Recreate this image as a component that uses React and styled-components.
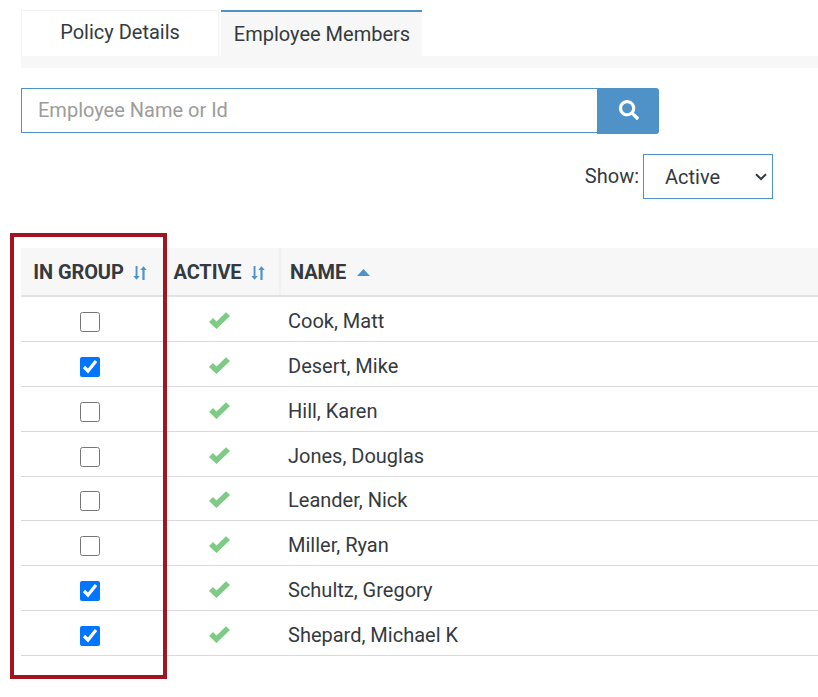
import React from "react";
import styled, { createGlobalStyle } from "styled-components";
import { FaSearch } from "react-icons/fa";

const GlobalStyle = createGlobalStyle`
  html, body {
    margin: 0;
    background: #fff;
    overflow: hidden;
  }
  body {
    font-family: Roboto, "Liberation Sans", sans-serif;
    color: #343a40;
  }
`;

const Page = styled.div`
  position: relative;
  width: 818px;
  height: 697px;
  padding: 10px 0 0 21px;
  box-sizing: border-box;
`;

const TabBar = styled.div`
  display: flex;
  gap: 2px;
  height: 46px;
`;

const Tab = styled.div`
  box-sizing: border-box;
  width: ${(p) => p.$width}px;
  display: flex;
  justify-content: center;
  align-items: center;
  font-size: 20px;
  border: ${(p) => (p.$active ? "0" : "1px solid #f3f3f3")};
  border-bottom: 0;
  border-top: ${(p) => (p.$active ? "2px solid #4f92c8" : "1px solid #f3f3f3")};
  background: ${(p) => (p.$active ? "#f7f7f7" : "#fff")};
  padding-bottom: ${(p) => (p.$active ? "0" : "3px")};
  padding-left: ${(p) => (p.$active ? "1px" : "0")};
`;

const TabStrip = styled.div`
  height: 12px;
  background: #f7f7f7;
`;

const SearchRow = styled.div`
  display: flex;
  margin-top: 20px;
  width: 638px;
  height: 46px;
`;

const SearchInput = styled.input`
  box-sizing: border-box;
  width: 577px;
  height: 45px;
  padding: 0 16px 2px;
  border: 1px solid #4f92c8;
  border-right: 0;
  outline: 0;
  font: 20px Roboto, sans-serif;
  color: #343a40;
  &::placeholder {
    color: #9c9c9c;
    opacity: 1;
  }
`;

const SearchButton = styled.button`
  width: 62px;
  height: 46px;
  margin-left: -1px;
  display: flex;
  align-items: center;
  justify-content: center;
  padding: 0 0 2px 1px;
  border: 0;
  border-radius: 0 3px 3px 0;
  background: #4f92c8;
  color: #fff;
  font-size: 20px;
`;

const FilterRow = styled.div`
  display: flex;
  align-items: center;
  justify-content: flex-end;
  gap: 4px;
  width: 752px;
  margin-top: 20px;
  height: 45px;
`;

const FilterLabel = styled.label`
  font-size: 20px;
  padding-bottom: 1px;
`;

const SelectWrap = styled.div`
  position: relative;
  width: 130px;
  height: 45px;
`;

const Select = styled.select`
  appearance: none;
  box-sizing: border-box;
  width: 100%;
  height: 100%;
  padding: 0 0 0 21px;
  border: 1px solid #4f92c8;
  border-radius: 0;
  outline: 0;
  background: #fff;
  color: #343a40;
  font: 20px Roboto, sans-serif;
`;

const Chevron = styled.svg`
  position: absolute;
  right: 6px;
  top: 19px;
  pointer-events: none;
`;

const Table = styled.div`
  margin-top: 49px;
  width: 797px;
`;

const HeaderRow = styled.div`
  display: grid;
  grid-template-columns: 138px 120px 1fr;
  height: 49px;
  background: #f7f7f7;
  border-bottom: 2px solid #e2e2e2;
  box-sizing: border-box;
`;

const HeaderCell = styled.div`
  display: flex;
  align-items: center;
  justify-content: ${(p) => (p.$left ? "flex-start" : "center")};
  padding-left: ${(p) => (p.$left ? "9px" : "0")};
  gap: ${(p) => p.$gap || 9}px;
  font-size: 20px;
  font-weight: 700;
  letter-spacing: -0.1px;
  color: #343a40;
  border-left: ${(p) => (p.$left ? "2px solid #f1f1f1" : "0")};
`;

const Row = styled.div`
  display: grid;
  grid-template-columns: 138px 120px 1fr;
  height: 44.88px;
  box-sizing: border-box;
  border-bottom: 1px solid #d9d9d9;
`;

const Cell = styled.div`
  display: flex;
  align-items: center;
  justify-content: center;
`;

const NameCell = styled.div`
  display: flex;
  align-items: center;
  padding: 4px 0 0 9px;
  font-size: 20px;
`;

const Checkbox = styled.input.attrs({ type: "checkbox" })`
  width: 20px;
  height: 20px;
  margin: 6px 0 0;
`;

const CheckMark = styled.svg`
  margin-top: 3px;
`;

const SortSvg = styled.svg`
  margin-top: 3px;
`;

const CaretSvg = styled.svg`
  margin-top: 2px;
`;

const Highlight = styled.div`
  position: absolute;
  left: 10px;
  top: 233px;
  width: 157px;
  height: 446px;
  box-sizing: border-box;
  border: 4px solid #a01520;
  pointer-events: none;
`;

const SortIcon = () => (
  <SortSvg width="14" height="14" viewBox="0 0 14 14" fill="#4f92c8">
    <path d="M2.6 0h1.9v10h2.3L3.5 13.8.3 10h2.3z" />
    <path d="M9.4 14h2.2V4h2.1L10.5.2 7.3 4h2.1z" />
  </SortSvg>
);

const SortUp = () => (
  <CaretSvg width="13" height="8" viewBox="0 0 13 8">
    <path d="M6.5 0 13 7H0z" fill="#4f92c8" />
  </CaretSvg>
);

const Check = () => (
  <CheckMark width="21" height="17" viewBox="0 0 21 17" fill="#7dcb85">
    <path d="M0 10 4 6l3.5 3.4L17 .2 21 4 7.5 17z" />
  </CheckMark>
);

const members = [
  { name: "Cook, Matt", inGroup: false },
  { name: "Desert, Mike", inGroup: true },
  { name: "Hill, Karen", inGroup: false },
  { name: "Jones, Douglas", inGroup: false },
  { name: "Leander, Nick", inGroup: false },
  { name: "Miller, Ryan", inGroup: false },
  { name: "Schultz, Gregory", inGroup: true },
  { name: "Shepard, Michael K", inGroup: true },
];

export default function App() {
  return (
    <Page>
      <GlobalStyle />
      <TabBar>
        <Tab $width={198}>Policy Details</Tab>
        <Tab $width={201} $active>Employee Members</Tab>
      </TabBar>
      <TabStrip />
      <SearchRow>
        <SearchInput placeholder="Employee Name or Id" />
        <SearchButton aria-label="Search"><FaSearch /></SearchButton>
      </SearchRow>
      <FilterRow>
        <FilterLabel>Show:</FilterLabel>
        <SelectWrap>
          <Select defaultValue="Active">
            <option>Active</option>
            <option>Inactive</option>
            <option>All</option>
          </Select>
          <Chevron width="12" height="8" viewBox="0 0 12 8" fill="none" stroke="#343a40" strokeWidth="2">
            <path d="M1 1.2 6 6l5-4.8" />
          </Chevron>
        </SelectWrap>
      </FilterRow>
      <Table>
        <HeaderRow>
          <HeaderCell>IN GROUP <SortIcon /></HeaderCell>
          <HeaderCell>ACTIVE <SortIcon /></HeaderCell>
          <HeaderCell $left $gap={11}>NAME <SortUp /></HeaderCell>
        </HeaderRow>
        {members.map((m) => (
          <Row key={m.name}>
            <Cell><Checkbox defaultChecked={m.inGroup} /></Cell>
            <Cell><Check /></Cell>
            <NameCell>{m.name}</NameCell>
          </Row>
        ))}
      </Table>
      <Highlight />
    </Page>
  );
}
